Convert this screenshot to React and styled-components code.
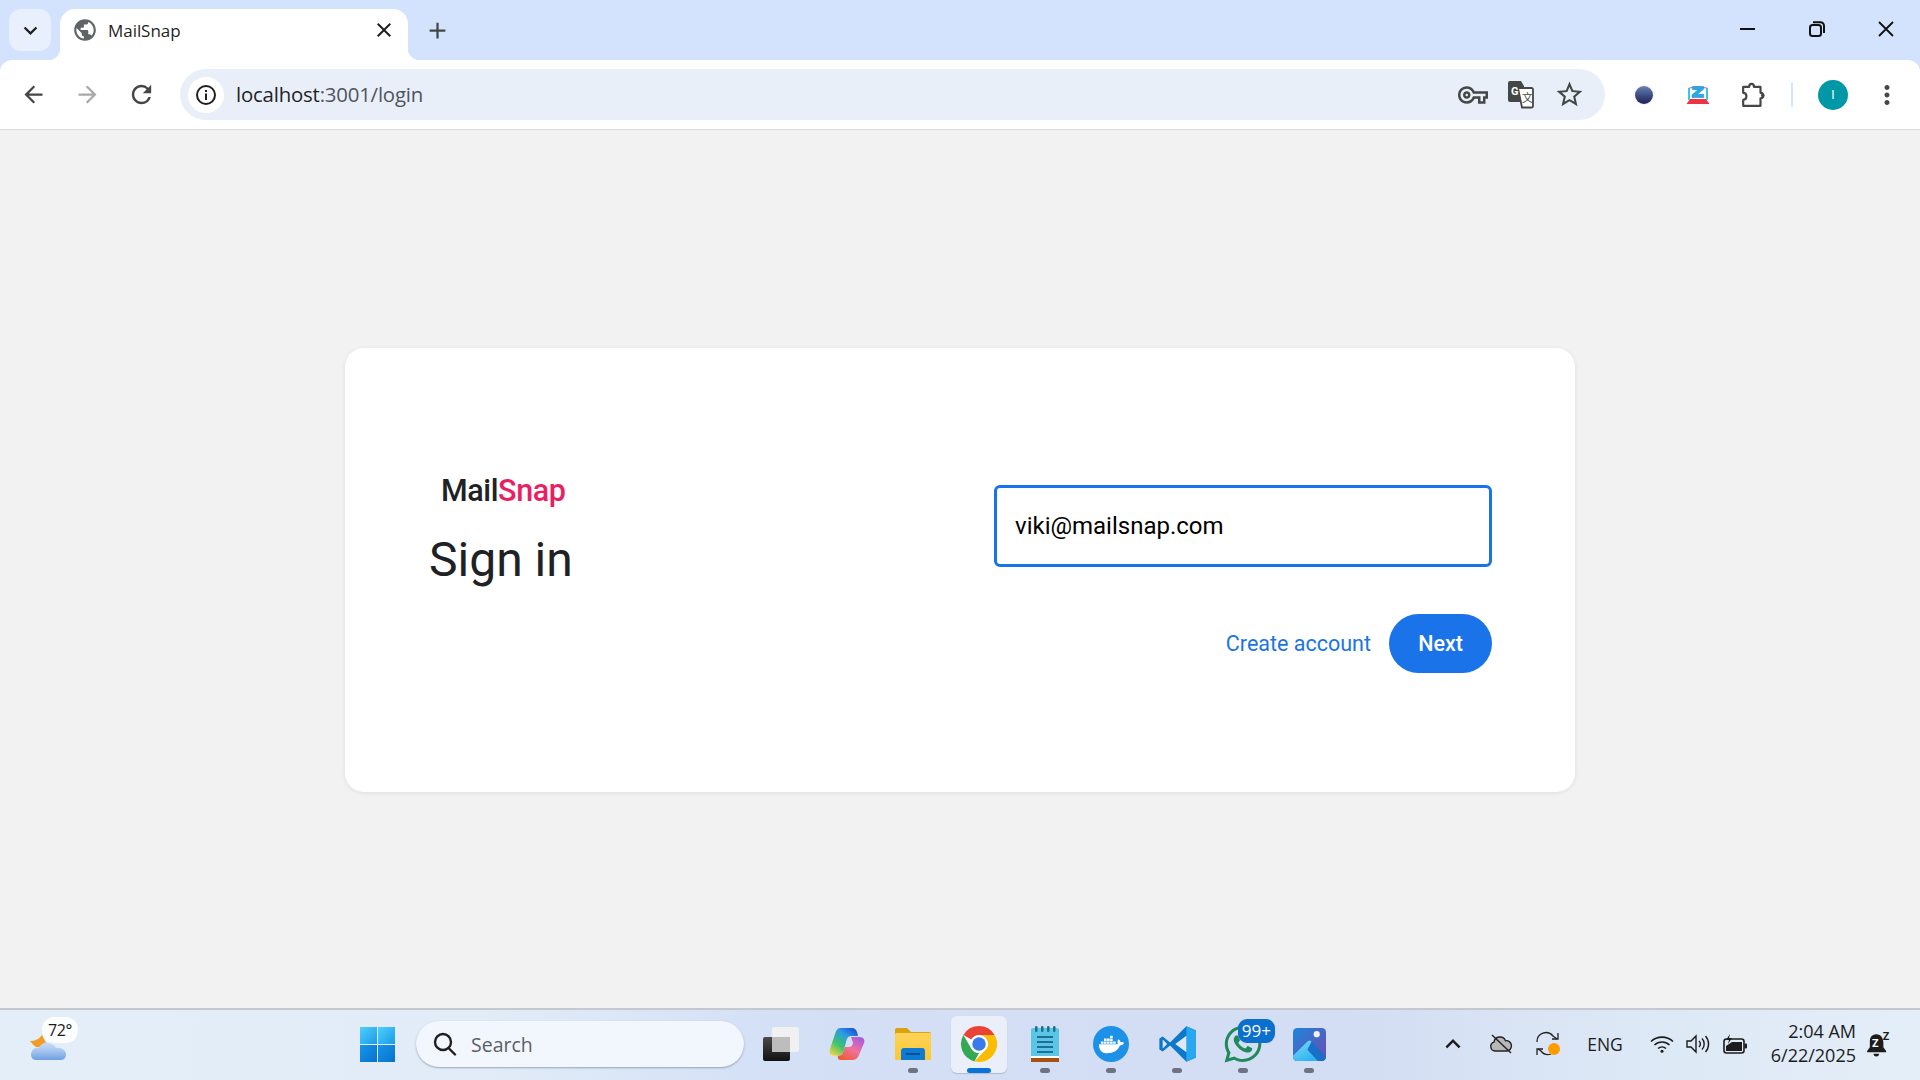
import React from 'react';
import styled, { createGlobalStyle } from 'styled-components';
import { MdPublic, MdArrowBack, MdArrowForward, MdRefresh, MdClose, MdAdd, MdKeyboardArrowDown, MdKeyboardArrowUp, MdMoreVert, MdStarBorder, MdOutlineVpnKey } from 'react-icons/md';
import { FaDocker, FaWhatsapp } from 'react-icons/fa';

const GlobalStyle = createGlobalStyle`
  html, body { margin: 0; padding: 0; }
  body { font-family: "Roboto", "Liberation Sans", sans-serif; background: #f2f2f2; }
`;

const Screen = styled.div`
  display: flex;
  flex-direction: column;
  height: 100vh;
  overflow: hidden;
`;

/* browser chrome */
const BrowserTop = styled.div`
  flex: none;
  background: #d3e3fd;
`;

const TabStrip = styled.div`
  display: flex;
  align-items: flex-end;
  height: 60px;
`;

const TabSearch = styled.div`
  display: flex;
  align-items: center;
  justify-content: center;
  align-self: flex-start;
  width: 42px;
  height: 42px;
  margin: 9px 0 0 9px;
  border-radius: 12px;
  background: #e9f0fd;
  color: #1f1f1f;
  font-size: 27px;
`;

const Tab = styled.div`
  position: relative;
  display: flex;
  align-items: center;
  width: 348px;
  height: 51px;
  margin-left: 9px;
  padding: 0 12px 9px 12px;
  box-sizing: border-box;
  background: #fff;
  border-radius: 15px 15px 0 0;

  &::before, &::after {
    content: '';
    position: absolute;
    bottom: 0;
    width: 12px;
    height: 12px;
  }
  &::before {
    left: -12px;
    background: radial-gradient(circle at 0 0, transparent 12px, #fff 12.5px);
  }
  &::after {
    right: -12px;
    background: radial-gradient(circle at 100% 0, transparent 12px, #fff 12.5px);
  }
`;

const TabFavicon = styled.span`
  display: flex;
  color: #5f6368;
  font-size: 26px;
`;

const TabTitle = styled.span`
  flex: 1;
  margin-left: 10px;
  font-family: "Open Sans", "Liberation Sans", sans-serif;
  font-size: 17px;
  letter-spacing: -0.05px;
  color: #1f1f1f;
`;

const TabClose = styled.span`
  display: flex;
  color: #1f1f1f;
  font-size: 24px;
`;

const NewTab = styled.div`
  display: flex;
  align-self: flex-start;
  margin: 17px 0 0 16px;
  color: #444746;
  font-size: 27px;
`;

const WindowControls = styled.div`
  display: flex;
  align-self: flex-start;
  margin-left: auto;
`;

const WindowButton = styled.div`
  display: flex;
  align-items: center;
  justify-content: center;
  width: 69px;
  height: 58px;
`;

const Toolbar = styled.div`
  display: flex;
  align-items: center;
  height: 69px;
  padding: 0 6px;
  background: #fff;
  border-bottom: 1px solid #dadce0;
  border-radius: 12px 12px 0 0;
`;

const ToolButton = styled.div`
  display: flex;
  align-items: center;
  justify-content: center;
  width: ${p => p.$w || 54}px;
  height: 36px;
  color: ${p => p.$color || '#444746'};
  font-size: ${p => p.$size || 27}px;
`;

const AddressBar = styled.div`
  display: flex;
  align-items: center;
  width: 1425px;
  height: 51px;
  margin: 0 12px;
  padding: 0 12px 0 8px;
  box-sizing: border-box;
  border-radius: 26px;
  background: #e9eff9;
`;

const SiteInfo = styled.div`
  display: flex;
  align-items: center;
  justify-content: center;
  width: 36px;
  height: 36px;
  border-radius: 50%;
  background: #fff;
`;

const Url = styled.div`
  flex: 1;
  margin: -2px 0 0 12px;
  font-family: "Open Sans", "Liberation Sans", sans-serif;
  font-size: 20.4px;
  letter-spacing: -0.2px;
  color: #1f1f1f;

  span { color: #50555c; }
`;

const ToolSeparator = styled.div`
  width: 2px;
  height: 24px;
  margin: 0 25px 0 8px;
  background: #d3e3fd;
`;

const ProfileAvatar = styled.div`
  display: flex;
  align-items: center;
  justify-content: center;
  width: 30px;
  height: 30px;
  margin-right: 12px;
  border-radius: 50%;
  background: #0097a7;
  color: #fff;
  font-size: 12px;
`;

const ExtensionDot = styled.div`
  width: 18px;
  height: 18px;
  border-radius: 50%;
  background: linear-gradient(180deg, #6682b0 0%, #3c4a80 55%, #20224f 100%);
  box-shadow: 0 0 2px rgba(120, 130, 190, 0.4);
`;

/* page */
const Main = styled.main`
  display: flex;
  flex: 1;
  align-items: center;
  justify-content: center;
  padding-top: 1px;
  background: #f2f2f2;
`;

const Card = styled.div`
  display: flex;
  justify-content: space-between;
  width: 1230px;
  height: 444px;
  padding: 124px 83px 0 84px;
  box-sizing: border-box;
  background: #fff;
  border-radius: 19px;
  box-shadow: 0 1px 5px rgba(0, 0, 0, 0.08);
`;

const Intro = styled.div`
  display: flex;
  flex-direction: column;
`;

const Logo = styled.div`
  margin-left: 12px;
  font-size: 30.5px;
  line-height: 38px;
  font-weight: 500;
  letter-spacing: -0.4px;
  color: #202124;

  span { color: #e91e63; }
`;

const Heading = styled.h1`
  margin: 21px 0 0;
  font-size: 48px;
  line-height: 58px;
  font-weight: 400;
  color: #202124;
`;

const Form = styled.form`
  display: flex;
  flex-direction: column;
  width: 498px;
  margin-top: 13px;
`;

const EmailInput = styled.input`
  height: 82px;
  padding: 0 18px;
  box-sizing: border-box;
  border: 3px solid #1a73e8;
  border-radius: 6px;
  outline: none;
  font-family: inherit;
  font-size: 24px;
  color: #000;
`;

const Actions = styled.div`
  display: flex;
  align-items: center;
  justify-content: flex-end;
  gap: 18px;
  margin-top: 47px;
`;

const CreateLink = styled.a`
  font-size: 21.5px;
  color: #1a73e8;
  text-decoration: none;
`;

const NextButton = styled.button`
  width: 103px;
  height: 59px;
  border: none;
  border-radius: 30px;
  background: #1a73e8;
  color: #fff;
  font-family: inherit;
  font-size: 21.5px;
  font-weight: 500;
`;

/* windows taskbar */
const Taskbar = styled.footer`
  display: flex;
  align-items: center;
  flex: none;
  height: 72px;
  padding: 0 20px 2px 0;
  box-sizing: border-box;
  border-top: 2px solid #c5c9cf;
  background: linear-gradient(90deg, #e3eef8 0%, #e2ecf8 25%, #d4e0f6 40%, #d3ddf3 70%, #dde8f6 85%, #e3eef8 100%);
  font-family: "Open Sans", "Liberation Sans", sans-serif;
`;

const Weather = styled.div`
  position: relative;
  display: flex;
  align-items: center;
  width: 360px;
  height: 100%;
  padding-left: 30px;
  box-sizing: border-box;
`;

const TempBadge = styled.span`
  position: absolute;
  top: 7px;
  left: 42px;
  padding: 2px 6px;
  border-radius: 12px;
  background: rgba(255, 255, 255, 0.85);
  font-size: 16px;
  letter-spacing: -0.4px;
  color: #1a1a1a;
`;

const StartButton = styled.div`
  display: flex;
  width: 35px;
`;

const SearchBox = styled.div`
  display: flex;
  align-items: center;
  width: 328px;
  height: 46px;
  margin: 0 4px 0 21px;
  padding-left: 17px;
  box-sizing: border-box;
  border-radius: 23px;
  background: #f2f6fd;
  box-shadow: 0 1px 2px rgba(70, 80, 110, 0.45);
`;

const SearchLabel = styled.span`
  margin-left: 14px;
  font-size: 19.5px;
  color: #5b5f66;
`;

const AppButton = styled.div`
  position: relative;
  display: flex;
  align-items: center;
  justify-content: center;
  width: 56px;
  height: 57px;
  margin: 0 5px;
  border-radius: 6px;
  background: ${p => (p.$active ? '#eaeffa' : 'transparent')};
  box-shadow: ${p => (p.$active ? '0 1px 1px rgba(70, 80, 110, 0.25)' : 'none')};

  &::after {
    content: '';
    display: ${p => (p.$running || p.$active ? 'block' : 'none')};
    position: absolute;
    bottom: 0;
    left: 50%;
    width: ${p => (p.$active ? 24 : 10)}px;
    height: 5px;
    margin-left: ${p => (p.$active ? -12 : -5)}px;
    border-radius: 3px;
    background: ${p => (p.$active ? '#0a74d6' : '#6d7380')};
  }
`;

const DockerBadge = styled.div`
  display: flex;
  align-items: center;
  justify-content: center;
  width: 36px;
  height: 36px;
  border-radius: 50%;
  background: #1d91e8;
  color: #fff;
  font-size: 25px;
`;

const WhatsappIcon = styled.div`
  display: flex;
  color: #1f8a5b;
  font-size: 42px;
`;

const CountBadge = styled.span`
  position: absolute;
  top: 3px;
  right: -4px;
  padding: 1px 4px 2px;
  border-radius: 9px;
  background: #0b6fce;
  color: #fff;
  font-size: 17px;
  line-height: 21px;
`;

const Tray = styled.div`
  display: flex;
  align-items: center;
  margin-left: auto;
`;

const TraySlot = styled.div`
  display: flex;
  align-items: center;
  justify-content: center;
  width: ${p => p.$w}px;
  font-size: ${p => p.$size || 24}px;
  color: #1c1c1c;
`;

const Clock = styled.div`
  width: 96px;
  margin-top: -2px;
  text-align: right;
  font-size: 18px;
  line-height: 24px;
  color: #1c1c1c;
  white-space: nowrap;
`;

const WinMin = () => (
  <svg width="15" height="2" viewBox="0 0 15 2"><rect width="15" height="2" fill="#111" /></svg>
);
const WinRestore = () => (
  <svg width="16" height="16" viewBox="0 0 16 16" fill="none" stroke="#111" strokeWidth="2">
    <rect x="1" y="4" width="11" height="11" rx="2.5" />
    <path d="M4 1.2h7.5a3.5 3.5 0 0 1 3.5 3.5V12" />
  </svg>
);
const WinClose = () => (
  <svg width="16" height="16" viewBox="0 0 16 16" stroke="#111" strokeWidth="1.8"><path d="M1 1l14 14M15 1L1 15" /></svg>
);
const InfoIcon = () => (
  <svg width="22" height="22" viewBox="0 0 22 22" fill="none">
    <circle cx="11" cy="11" r="9" stroke="#1f1f1f" strokeWidth="2" />
    <rect x="10" y="9.5" width="2" height="6.5" fill="#1f1f1f" />
    <rect x="10" y="6" width="2" height="2" fill="#1f1f1f" />
  </svg>
);
const TranslateIcon = () => (
  <svg width="26" height="28" viewBox="0 0 26 28">
    <path d="M2 0h11l3 5v16H2a2 2 0 0 1-2-2V2a2 2 0 0 1 2-2z" fill="#444746" />
    <path d="M10 7h13.5a1.5 1.5 0 0 1 1.5 1.5V25a1.5 1.5 0 0 1-1.5 1.5H14z" fill="#fff" stroke="#444746" strokeWidth="1.8" />
    <text x="3" y="14" fontSize="11" fontWeight="700" fill="#fff" fontFamily="Roboto, sans-serif">G</text>
    <text x="14" y="21" fontSize="11" fill="#444746" fontFamily="Noto Sans CJK SC, sans-serif">文</text>
  </svg>
);
const ZExtension = () => (
  <svg width="24" height="18" viewBox="0 0 24 18">
    <path d="M4 13h16l3.500 5H.5z" fill="#ee3347" />
    <path d="M2 2.500q10-3 20 0" fill="none" stroke="#ee3347" strokeWidth="1.2" />
    <rect x="2" y="2" width="2" height="12" fill="#3cc4e4" />
    <rect x="20" y="2" width="2" height="12" fill="#3cc4e4" />
    <path d="M6.500 0.500h11v2.800l-6.200 5h6.400v3.200H6v-2.800l6.200-5H6.500z" fill="#29a8e6" stroke="#1280c0" strokeWidth="0.5" />
  </svg>
);
const PuzzleIcon = () => (
  <svg width="26" height="26" viewBox="0 0 24 24" fill="none" stroke="#444746" strokeWidth="2" strokeLinejoin="round">
    <path d="M2 4.500H7.500C7.500 0.800 12 0.800 12 4.500H18V10C21.500 10 21.500 15 18 15V22H2V16.500C6 16.500 6 10 2 10Z" />
    <circle cx="20" cy="12.500" r="1.600" fill="#444746" stroke="none" />
  </svg>
);
const WeatherIcon = () => (
  <svg width="36" height="44" viewBox="0 0 36 44">
    <defs>
      <linearGradient id="cloudFill" x1="0" y1="0" x2="0" y2="1">
        <stop offset="0" stopColor="#c8dcf6" />
        <stop offset="0.5" stopColor="#a3c4ef" />
        <stop offset="1" stopColor="#6f9fe0" />
      </linearGradient>
    </defs>
    <path d="M0 19Q8 19 12 13L16 21Q10 26 6 25Q3 23 0 19z" fill="#f59a23" />
    <path d="M6 38C1 38 0 32 2 29C3 26 7 25 9 26C11 21 15 20 19 21C23 22 25 24 26 26C31 25 36 29 36 32C36 37 33 38 30 38z" fill="url(#cloudFill)" />
  </svg>
);
const WindowsLogo = () => (
  <svg width="35" height="35" viewBox="0 0 35 35">
    <defs>
      <linearGradient id="winTop" x1="0" y1="0" x2="1" y2="1">
        <stop offset="0" stopColor="#4fd0fb" />
        <stop offset="1" stopColor="#1a9be8" />
      </linearGradient>
      <linearGradient id="winBottom" x1="0" y1="0" x2="1" y2="1">
        <stop offset="0" stopColor="#1795e6" />
        <stop offset="1" stopColor="#0672cf" />
      </linearGradient>
    </defs>
    <rect x="0" y="0" width="17" height="17" fill="url(#winTop)" />
    <rect x="18" y="0" width="17" height="17" fill="url(#winTop)" />
    <rect x="0" y="18" width="17" height="17" fill="url(#winBottom)" />
    <rect x="18" y="18" width="17" height="17" fill="url(#winBottom)" />
  </svg>
);
const SearchGlass = () => (
  <svg width="24" height="24" viewBox="0 0 24 24" fill="none" stroke="#1f1f1f" strokeWidth="2.4" strokeLinecap="round">
    <circle cx="10" cy="10" r="8" />
    <path d="M16 16.500l6 6" />
  </svg>
);
const TaskView = () => (
  <svg width="36" height="34" viewBox="0 0 36 34">
    <defs>
      <linearGradient id="tvDark" x1="0" y1="0" x2="0" y2="1">
        <stop offset="0" stopColor="#4a4a4a" />
        <stop offset="1" stopColor="#111" />
      </linearGradient>
    </defs>
    <rect x="0" y="10" width="27" height="24" rx="2" fill="url(#tvDark)" />
    <rect x="9" y="0" width="27" height="25" rx="2" fill="#f1f1f1" />
    <rect x="9" y="10" width="18" height="15" fill="#bdbdbd" />
  </svg>
);
const Copilot = () => (
  <svg width="36" height="34" viewBox="0 0 36 34">
    <defs>
      <linearGradient id="copA" x1="0.85" y1="0" x2="0.1" y2="1">
        <stop offset="0" stopColor="#1c4fd4" />
        <stop offset="0.3" stopColor="#2a9be8" />
        <stop offset="0.65" stopColor="#3fc26c" />
        <stop offset="1" stopColor="#f2d53c" />
      </linearGradient>
      <linearGradient id="copB" x1="0.85" y1="0" x2="0.15" y2="1">
        <stop offset="0" stopColor="#a45ae6" />
        <stop offset="0.5" stopColor="#f0719c" />
        <stop offset="1" stopColor="#ef5a2e" />
      </linearGradient>
    </defs>
    <path d="M22 10H30C34 10 36.500 12 35 16L30 28C28.500 32 26 33 23 33H12C9 33 8.500 31 9 28.500H11C13 28 14 26 15 23L16 20H20C22 20 23 19 24 16z" fill="url(#copB)" />
    <path d="M11 1H23C26 1 28 3 29 9H23C19 9 18 11 17 15L15 23C14 27 12 28.500 8 28.500H5C1 28.500 0 26 1 22L6 7C7 3 9 1 11 1z" fill="url(#copA)" />
  </svg>
);
const FolderIcon = () => (
  <svg width="36" height="32" viewBox="0 0 36 32">
    <defs>
      <linearGradient id="folderBody" x1="0" y1="0" x2="0" y2="1">
        <stop offset="0" stopColor="#fcd35a" />
        <stop offset="1" stopColor="#fdc72f" />
      </linearGradient>
    </defs>
    <path d="M0 2a2 2 0 0 1 2-2h10l4 4h18a2 2 0 0 1 2 2v6H0z" fill="#d9a20e" />
    <rect x="0" y="5" width="36" height="27" rx="1.5" fill="url(#folderBody)" />
    <path d="M6 32v-9a3 3 0 0 1 3-3h18a3 3 0 0 1 3 3v9z" fill="#0e7ad4" />
    <rect x="11" y="25" width="14" height="2" fill="#044f94" />
  </svg>
);
const ChromeIcon = () => (
  <svg width="36" height="36" viewBox="0 0 48 48">
    <circle cx="24" cy="24" r="24" fill="#fff" />
    <path d="M24 0a24 24 0 0 1 20.800 12H24a12 12 0 0 0-10.400 6L3.200 12A24 24 0 0 1 24 0z" fill="#ea4335" />
    <path d="M3.200 12l10.400 18A12 12 0 0 0 24 36l-6.200 11.200A24 24 0 0 1 3.200 12z" fill="#34a853" />
    <path d="M44.800 12A24 24 0 0 1 24 48l-6.200-.8L34.400 30A12 12 0 0 0 34.400 18 12 12 0 0 0 24 12z" fill="#fbbc04" />
    <circle cx="24" cy="24" r="11.5" fill="#fff" />
    <circle cx="24" cy="24" r="9" fill="#3a7bea" />
  </svg>
);
const NotepadIcon = () => (
  <svg width="28" height="36" viewBox="0 0 28 36">
    <rect x="0" y="2" width="28" height="30" rx="2" fill="#5cc4e4" />
    <rect x="0" y="31" width="28" height="5" fill="#a8500f" />
    <rect x="0" y="30" width="28" height="2" fill="#fff" />
    {[3, 9, 15, 21].map(x => <rect key={x} x={x + 1} y="0" width="2.5" height="6" rx="1.2" fill="#1f6f8f" />)}
    {[11, 16, 21, 26].map(y => <rect key={y} x="6" y={y - 1} width="16" height="2" fill="#1e6f96" />)}
  </svg>
);
const VsCode = () => (
  <svg width="37" height="38" viewBox="0 0 100 100">
    <path d="M74 2L30 46 10 30 1 35v30l9 5 20-16 44 44 25-11V13z" fill="#0b78c9" />
    <path d="M74 2l25 11v74L74 98z" fill="#27a8f0" />
    <path d="M74 28v44L44 50z" fill="#e0e8f5" />
    <path d="M10 38l12 12-12 12z" fill="#e0e8f5" />
  </svg>
);
const PhotosIcon = () => (
  <svg width="33" height="33" viewBox="0 0 32 32">
    <defs>
      <linearGradient id="photoBg" x1="0" y1="0" x2="1" y2="1">
        <stop offset="0" stopColor="#1c86dc" />
        <stop offset="1" stopColor="#6f4bb0" />
      </linearGradient>
      <linearGradient id="photoHill" x1="0" y1="0" x2="0.6" y2="1">
        <stop offset="0" stopColor="#7fdcfa" />
        <stop offset="1" stopColor="#2fb4f0" />
      </linearGradient>
    </defs>
    <rect width="32" height="32" rx="4" fill="url(#photoBg)" />
    <circle cx="23" cy="6" r="3" fill="#eef2f8" />
    <path d="M0 27L14 13Q16 11 18 13L32 28V28A4 4 0 0 1 28 32H4A4 4 0 0 1 0 28z" fill="#1a6fc8" />
    <path d="M0 27L14 13Q16 11 18 13L14 21 24 32H4A4 4 0 0 1 0 28z" fill="url(#photoHill)" />
  </svg>
);
const CloudOff = () => (
  <svg width="24" height="20" viewBox="0 0 24 20" fill="#b8b8b8" stroke="#222" strokeWidth="1.4">
    <path d="M6 17a4.5 4.5 0 0 1-1-8.800 6 6 0 0 1 11.500-1.500A5.200 5.200 0 0 1 18 17z" />
    <path d="M3 1l19 18" fill="none" />
  </svg>
);
const SyncIcon = () => (
  <svg width="24" height="26" viewBox="0 0 24 26" fill="none" stroke="#222" strokeWidth="1.3">
    <path d="M1 11a9 9 0 0 1 16-6l4 3" />
    <path d="M22 2v6h-6" />
    <path d="M15 23a9 9 0 0 1-10-3l-3-2" />
    <path d="M1 24v-6h6" />
    <circle cx="18" cy="18" r="6" fill="#ff9c00" stroke="none" />
  </svg>
);
const WifiIcon = () => (
  <svg width="24" height="18" viewBox="0 0 24 18" fill="none" stroke="#1c1c1c" strokeWidth="1.6">
    <path d="M1 6.500a16 16 0 0 1 22 0" />
    <path d="M4.500 10a11 11 0 0 1 15 0" />
    <path d="M8 13.500a6 6 0 0 1 8 0" />
    <circle cx="12" cy="16.200" r="1.5" fill="#1c1c1c" stroke="none" />
  </svg>
);
const VolumeIcon = () => (
  <svg width="24" height="20" viewBox="0 0 24 20" fill="none" stroke="#1c1c1c" strokeWidth="1.4">
    <path d="M1 7h4l5-5v16l-5-5H1z" />
    <path d="M13 7a4 4 0 0 1 0 6" />
    <path d="M16 4.500a8 8 0 0 1 0 11" />
    <path d="M19.500 2a12 12 0 0 1 0 16" />
  </svg>
);
const BatteryIcon = () => (
  <svg width="24" height="20" viewBox="0 0 24 20">
    <rect x="1" y="5" width="20" height="14" rx="2.5" fill="none" stroke="#1c1c1c" strokeWidth="1.6" />
    <path d="M3 17V12l6-4h10v9z" fill="#1c1c1c" />
    <rect x="21.500" y="9.500" width="2.5" height="5" rx="1" fill="#1c1c1c" />
    <path d="M7 0L3 6h3l-1 4 4-6H6z" fill="#1c1c1c" />
  </svg>
);
const SnoozeBell = () => (
  <svg width="25" height="26" viewBox="0 0 22 24">
    <path d="M9 3C4.500 3 3 6.500 3 10V15L0.500 18.500V19.500H18V18.500L15.500 15V11C15.500 7 13.500 3 9 3z" fill="#1c1c1c" />
    <path d="M6.500 21h5a2.500 2.500 0 0 1-5 0z" fill="#1c1c1c" />
    <text x="5" y="15" fontSize="10" fontWeight="700" fill="#fff" fontFamily="Roboto, sans-serif">Z</text>
    <text x="15" y="8" fontSize="10" fontWeight="700" fill="#1c1c1c" fontFamily="Roboto, sans-serif">Z</text>
  </svg>
);

const App = () => {
  return (
    <Screen>
      <GlobalStyle />
      <BrowserTop>
        <TabStrip>
          <TabSearch><MdKeyboardArrowDown /></TabSearch>
          <Tab>
            <TabFavicon><MdPublic /></TabFavicon>
            <TabTitle>MailSnap</TabTitle>
            <TabClose><MdClose /></TabClose>
          </Tab>
          <NewTab><MdAdd /></NewTab>
          <WindowControls>
            <WindowButton><WinMin /></WindowButton>
            <WindowButton><WinRestore /></WindowButton>
            <WindowButton><WinClose /></WindowButton>
          </WindowControls>
        </TabStrip>

        <Toolbar>
          <ToolButton><MdArrowBack /></ToolButton>
          <ToolButton $color="#a8a9aa"><MdArrowForward /></ToolButton>
          <ToolButton $size={29}><MdRefresh /></ToolButton>
          <AddressBar>
            <SiteInfo><InfoIcon /></SiteInfo>
            <Url>localhost<span>:3001/login</span></Url>
            <ToolButton $w={48} $size={30}><MdOutlineVpnKey /></ToolButton>
            <ToolButton $w={48}><TranslateIcon /></ToolButton>
            <ToolButton $w={48} $size={31}><MdStarBorder /></ToolButton>
          </AddressBar>
          <ToolButton><ExtensionDot /></ToolButton>
          <ToolButton><ZExtension /></ToolButton>
          <ToolButton $w={58}><PuzzleIcon /></ToolButton>
          <ToolSeparator />
          <ProfileAvatar>I</ProfileAvatar>
          <ToolButton $size={30}><MdMoreVert /></ToolButton>
        </Toolbar>
      </BrowserTop>

      <Main>
        <Card>
          <Intro>
            <Logo>Mail<span>Snap</span></Logo>
            <Heading>Sign in</Heading>
          </Intro>
          <Form>
            <EmailInput type="email" defaultValue="viki@mailsnap.com" />
            <Actions>
              <CreateLink href="#">Create account</CreateLink>
              <NextButton type="button">Next</NextButton>
            </Actions>
          </Form>
        </Card>
      </Main>

      <Taskbar>
        <Weather>
          <WeatherIcon />
          <TempBadge>72°</TempBadge>
        </Weather>
        <StartButton><WindowsLogo /></StartButton>
        <SearchBox>
          <SearchGlass />
          <SearchLabel>Search</SearchLabel>
        </SearchBox>
        <AppButton><TaskView /></AppButton>
        <AppButton><Copilot /></AppButton>
        <AppButton $running><FolderIcon /></AppButton>
        <AppButton $active><ChromeIcon /></AppButton>
        <AppButton $running><NotepadIcon /></AppButton>
        <AppButton $running><DockerBadge><FaDocker /></DockerBadge></AppButton>
        <AppButton $running><VsCode /></AppButton>
        <AppButton $running>
          <WhatsappIcon><FaWhatsapp /></WhatsappIcon>
          <CountBadge>99+</CountBadge>
        </AppButton>
        <AppButton $running><PhotosIcon /></AppButton>
        <Tray>
          <TraySlot $w={48} $size={30}><MdKeyboardArrowUp /></TraySlot>
          <TraySlot $w={47}><CloudOff /></TraySlot>
          <TraySlot $w={48}><SyncIcon /></TraySlot>
          <TraySlot $w={66} $size={17.5}>ENG</TraySlot>
          <TraySlot $w={48}><WifiIcon /></TraySlot>
          <TraySlot $w={24}><VolumeIcon /></TraySlot>
          <TraySlot $w={50}><BatteryIcon /></TraySlot>
          <Clock>2:04 AM<br />6/22/2025</Clock>
          <TraySlot $w={44}><SnoozeBell /></TraySlot>
        </Tray>
      </Taskbar>
    </Screen>
  );
};

export default App;
